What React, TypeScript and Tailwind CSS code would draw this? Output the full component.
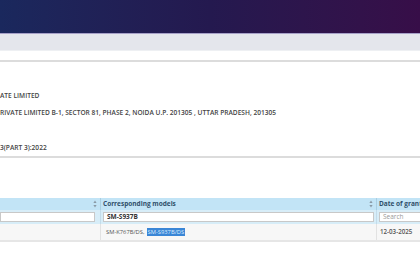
import React from "react";

function SortIcon() {
  return (
    <svg width="4" height="8" viewBox="0 0 4 8" className="shrink-0">
      <path d="M2 0.5 L3.6 3 L0.4 3 Z" fill="#8a9aa6" />
      <path d="M2 7.5 L3.6 5 L0.4 5 Z" fill="#8a9aa6" />
    </svg>
  );
}

export default function App() {
  const font = { fontFamily: '"Open Sans", "Liberation Sans", sans-serif' };
  return (
    <div className="w-[420px] h-[280px] overflow-hidden bg-white relative" style={font}>
      <div className="h-[34px] bg-gradient-to-r from-[#1a285d] via-[#24194f] to-[#370e48] border-b border-[#a6a0c8]" />
      <div className="h-[17px] bg-[#e4e6ec] border-b border-[#eef0f3]" />
      <div className="mt-[9px] -mx-2 h-[98px] border-y-2 border-[#dcdcdc] text-[#444] font-semibold text-[6.6px] leading-[8px] pl-2">
        <div className="mt-[30px]">ATE LIMITED</div>
        <div className="mt-[9px]">RIVATE LIMITED B-1, SECTOR 81, PHASE 2, NOIDA U.P. 201305 , UTTAR PRADESH, 201305</div>
        <div className="mt-[27px]">3(PART 3):2022</div>
      </div>
      <div className="mt-[40px] w-[470px] border-b-2 border-[#e6e6e6]">
        <div className="grid grid-cols-[101px_276px_93px] h-[12px] bg-[#c2e4f6] text-[6.5px] font-bold text-[#2f4f6a]">
          <div className="flex items-center justify-end pr-[3px] border-r border-[#a9cfe2]">
            <SortIcon />
          </div>
          <div className="flex items-center justify-between pl-[2px] pr-[3px] border-r border-[#a9cfe2]">
            <span>Corresponding models</span>
            <SortIcon />
          </div>
          <div className="flex items-center pl-[2px]">
            <span>Date of grant</span>
          </div>
        </div>
        <div className="grid grid-cols-[101px_276px_93px] h-[14px] bg-[#d7edf8] text-[6.5px]">
          <div className="flex items-center pr-[5px] pl-0 border-r border-[#c3dcea]">
            <div className="w-full h-[10px] bg-white border border-[#c8c8c8]" />
          </div>
          <div className="flex items-center px-[2px] border-r border-[#c3dcea]">
            <div className="w-full h-[10px] bg-white border border-[#c8c8c8] flex items-center pl-[3px] font-bold text-[#333]">
              SM-S937B
            </div>
          </div>
          <div className="flex items-center px-[2px]">
            <div className="w-full h-[10px] bg-white border border-[#c8c8c8] flex items-center pl-[3px] text-[#999]">
              Search
            </div>
          </div>
        </div>
        <div className="grid grid-cols-[101px_276px_93px] h-[16px] bg-[#f7f7f7] text-[5.8px] text-[#555]">
          <div className="border-r border-[#e2e2e2]" />
          <div className="flex items-center pl-[5px] border-r border-[#e2e2e2]">
            <span>SM-K767B/DS, </span>
            <span className="ml-[2px] bg-[#3a86d6] text-[#dcecff] px-[1px]">SM-S937B/DS</span>
          </div>
          <div className="flex items-center pl-[3px] font-semibold text-[6.2px]">12-03-2025</div>
        </div>
      </div>
    </div>
  );
}
